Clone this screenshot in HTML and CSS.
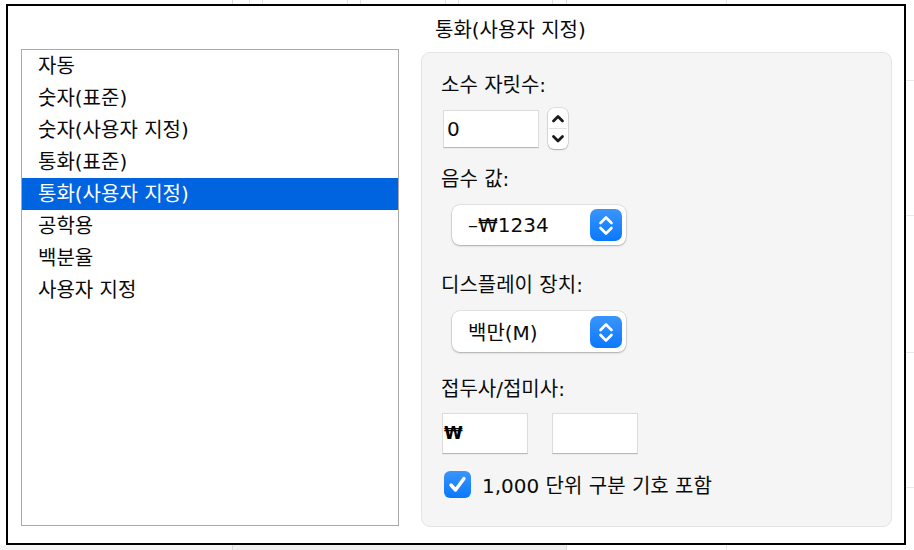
FILE: index.html
```html
<!DOCTYPE html>
<html lang="ko">
<head>
<meta charset="utf-8">
<title>통화(사용자 지정)</title>
<link rel="stylesheet" href="styles.css">
</head>
<body>
<div class="window">
  <div class="list-col">
    <ul class="list">
      <li>자동</li>
      <li>숫자(표준)</li>
      <li>숫자(사용자 지정)</li>
      <li>통화(표준)</li>
      <li class="selected">통화(사용자 지정)</li>
      <li>공학용</li>
      <li>백분율</li>
      <li>사용자 지정</li>
    </ul>
  </div>
  <div class="right-col">
    <div class="title">통화(사용자 지정)</div>
    <div class="panel">
      <div class="label">소수 자릿수:</div>
      <div class="stepper-row">
        <div class="field decimals">0</div>
        <div class="stepper">
          <svg width="20" height="41" viewBox="0 0 20 41">
            <line x1="1" y1="20.5" x2="19" y2="20.5" stroke="#e2e2e2" stroke-width="1"/>
            <polyline points="5.5,13 10,8.5 14.5,13" fill="none" stroke="#1a1a1a" stroke-width="2.8" stroke-linecap="round" stroke-linejoin="round"/>
            <polyline points="5.5,28.5 10,33 14.5,28.5" fill="none" stroke="#1a1a1a" stroke-width="2.8" stroke-linecap="round" stroke-linejoin="round"/>
          </svg>
        </div>
      </div>
      <div class="label l-neg">음수 값:</div>
      <div class="popup p-neg">
        <span class="popup-text">–₩1234</span>
        <span class="popup-btn">
          <svg width="32" height="32" viewBox="0 0 32 32">
            <polyline points="10.5,14 16,8.5 21.5,14" fill="none" stroke="#fff" stroke-width="2.6" stroke-linecap="round" stroke-linejoin="round"/>
            <polyline points="10.5,19 16,24.5 21.5,19" fill="none" stroke="#fff" stroke-width="2.6" stroke-linecap="round" stroke-linejoin="round"/>
          </svg>
        </span>
      </div>
      <div class="label l-disp">디스플레이 장치:</div>
      <div class="popup p-disp">
        <span class="popup-text">백만(M)</span>
        <span class="popup-btn">
          <svg width="32" height="32" viewBox="0 0 32 32">
            <polyline points="10.5,14 16,8.5 21.5,14" fill="none" stroke="#fff" stroke-width="2.6" stroke-linecap="round" stroke-linejoin="round"/>
            <polyline points="10.5,19 16,24.5 21.5,19" fill="none" stroke="#fff" stroke-width="2.6" stroke-linecap="round" stroke-linejoin="round"/>
          </svg>
        </span>
      </div>
      <div class="label l-fix">접두사/접미사:</div>
      <div class="fix-row">
        <div class="field fix prefix">₩</div>
        <div class="field fix suffix"></div>
      </div>
      <div class="check-row">
        <span class="checkbox">
          <svg width="27" height="27" viewBox="0 0 27 27">
            <polyline points="7,14 11.5,19 20,7.5" fill="none" stroke="#fff" stroke-width="3.4" stroke-linecap="round" stroke-linejoin="round"/>
          </svg>
        </span>
        <span class="check-label">1,000 단위 구분 기호 포함</span>
      </div>
    </div>
  </div>
</div>
</body>
</html>
```
FILE: styles.css
```css
* {
  box-sizing: border-box;
}

html,
body {
  margin: 0;
}

body {
  width: 914px;
  height: 550px;
  overflow: hidden;
  padding: 4px 0 0 6px;
  font-family: "DejaVu Sans", "Noto Sans CJK KR", sans-serif;
  font-size: 20px;
  font-weight: 400;
  color: #0a0a0a;
  background-color: #fff;
  background-image:
    linear-gradient(#f4f4f4, #f4f4f4),
    linear-gradient(#efefef, #efefef),
    linear-gradient(#d9d9d9, #d9d9d9),
    linear-gradient(#e2e2e2, #e2e2e2),
    linear-gradient(#e2e2e2, #e2e2e2),
    linear-gradient(#e2e2e2, #e2e2e2),
    linear-gradient(#e2e2e2, #e2e2e2),
    linear-gradient(#e2e2e2, #e2e2e2),
    linear-gradient(#e2e2e2, #e2e2e2),
    linear-gradient(#e2e2e2, #e2e2e2),
    linear-gradient(#d9d9d9, #d9d9d9),
    linear-gradient(#e6e6e6, #e6e6e6),
    linear-gradient(#e9e9e9, #e9e9e9),
    linear-gradient(#e9e9e9, #e9e9e9),
    linear-gradient(#e9e9e9, #e9e9e9),
    linear-gradient(#e9e9e9, #e9e9e9);
  background-repeat: no-repeat;
  background-position:
    0 545px,
    233px 545px,
    232px 0,
    249px 0,
    262px 0,
    347px 0,
    360px 0,
    445px 0,
    458px 0,
    552px 0,
    566px 0,
    726px 0,
    906px 80px,
    906px 215px,
    906px 352px,
    906px 487px;
  background-size:
    232px 5px,
    333px 5px,
    1px 550px,
    1px 550px,
    1px 550px,
    1px 550px,
    1px 550px,
    1px 550px,
    1px 550px,
    1px 550px,
    1px 550px,
    1px 550px,
    8px 1px,
    8px 1px,
    8px 1px,
    8px 1px;
}

.window {
  width: 900px;
  height: 541px;
  border: 2px solid #000;
  background: #fff;
  display: flex;
}

/* ---------- list ---------- */
.list-col {
  margin-left: 13px;
  padding-top: 43px;
}

.list {
  margin: 0;
  padding: 0;
  list-style: none;
  width: 378px;
  height: 477px;
  border: 1px solid #a9a9a9;
  background: #fff;
}

.list li {
  height: 32px;
  line-height: 32px;
  padding-left: 16px;
  white-space: nowrap;
}

.list li.selected {
  background: #0064e1;
  color: #fff;
}

/* ---------- right column ---------- */
.right-col {
  margin-left: 22px;
  width: 471px;
}

.title {
  margin-top: 12px;
  height: 24px;
  line-height: 24px;
  padding-left: 14px;
}

.panel {
  margin-top: 10px;
  height: 475px;
  border: 1px solid #e4e4e4;
  border-radius: 9px;
  background: #f5f5f5;
  padding: 20px 19px 0;
  display: flex;
  flex-direction: column;
  align-items: flex-start;
}

.label {
  height: 24px;
  line-height: 24px;
  white-space: nowrap;
}

.l-neg {
  margin-top: 18px;
}

.l-disp {
  margin-top: 28px;
}

.l-fix {
  margin-top: 25px;
}

/* text fields */
.field {
  background: #fff;
  border: 1px solid #dcdcdc;
  border-bottom-color: #b9b9b9;
  box-shadow: 0 0.5px 0 rgba(0, 0, 0, 0.08);
}

.stepper-row {
  margin-top: 11px;
  height: 41px;
  display: flex;
  align-items: center;
}

.decimals {
  margin-left: 2px;
  width: 96px;
  height: 38px;
  line-height: 36px;
  padding-left: 3px;
}

.stepper {
  margin-left: 9px;
  width: 20px;
  height: 41px;
  border-radius: 6px;
  background: #fff;
  box-shadow: 0 0 0 0.5px rgba(0, 0, 0, 0.18), 0 1px 1.5px rgba(0, 0, 0, 0.22);
  display: flex;
}

/* popups */
.popup {
  margin-top: 14px;
  margin-left: 11px;
  width: 174px;
  height: 40px;
  border-radius: 8px;
  background: #fff;
  box-shadow: 0 0 0 0.5px rgba(0, 0, 0, 0.14), 0 1px 2px rgba(0, 0, 0, 0.25);
  display: flex;
  align-items: center;
  justify-content: space-between;
  padding: 0 4px 0 16px;
}

.p-disp {
  height: 41px;
}

.popup-text {
  white-space: nowrap;
}

.popup-btn {
  width: 32px;
  height: 32px;
  border-radius: 7px;
  background: linear-gradient(#3a95fb, #0a78fe);
  display: flex;
}

/* prefix / suffix */
.fix-row {
  margin-top: 12px;
  display: flex;
  gap: 24px;
}

.fix {
  width: 86px;
  height: 41px;
}

.prefix {
  margin-left: 1px;
  line-height: 39px;
  padding-left: 1px;
  font-weight: bold;
  font-size: 17px;
  color: #000;
}

/* checkbox */
.check-row {
  margin-top: 16px;
  height: 28px;
  display: flex;
  align-items: center;
}

.checkbox {
  margin-left: 3px;
  width: 27px;
  height: 27px;
  border-radius: 6px;
  background: linear-gradient(#3a95fb, #0a78fe);
  display: flex;
}

.check-label {
  margin-left: 11px;
  white-space: nowrap;
}
```
